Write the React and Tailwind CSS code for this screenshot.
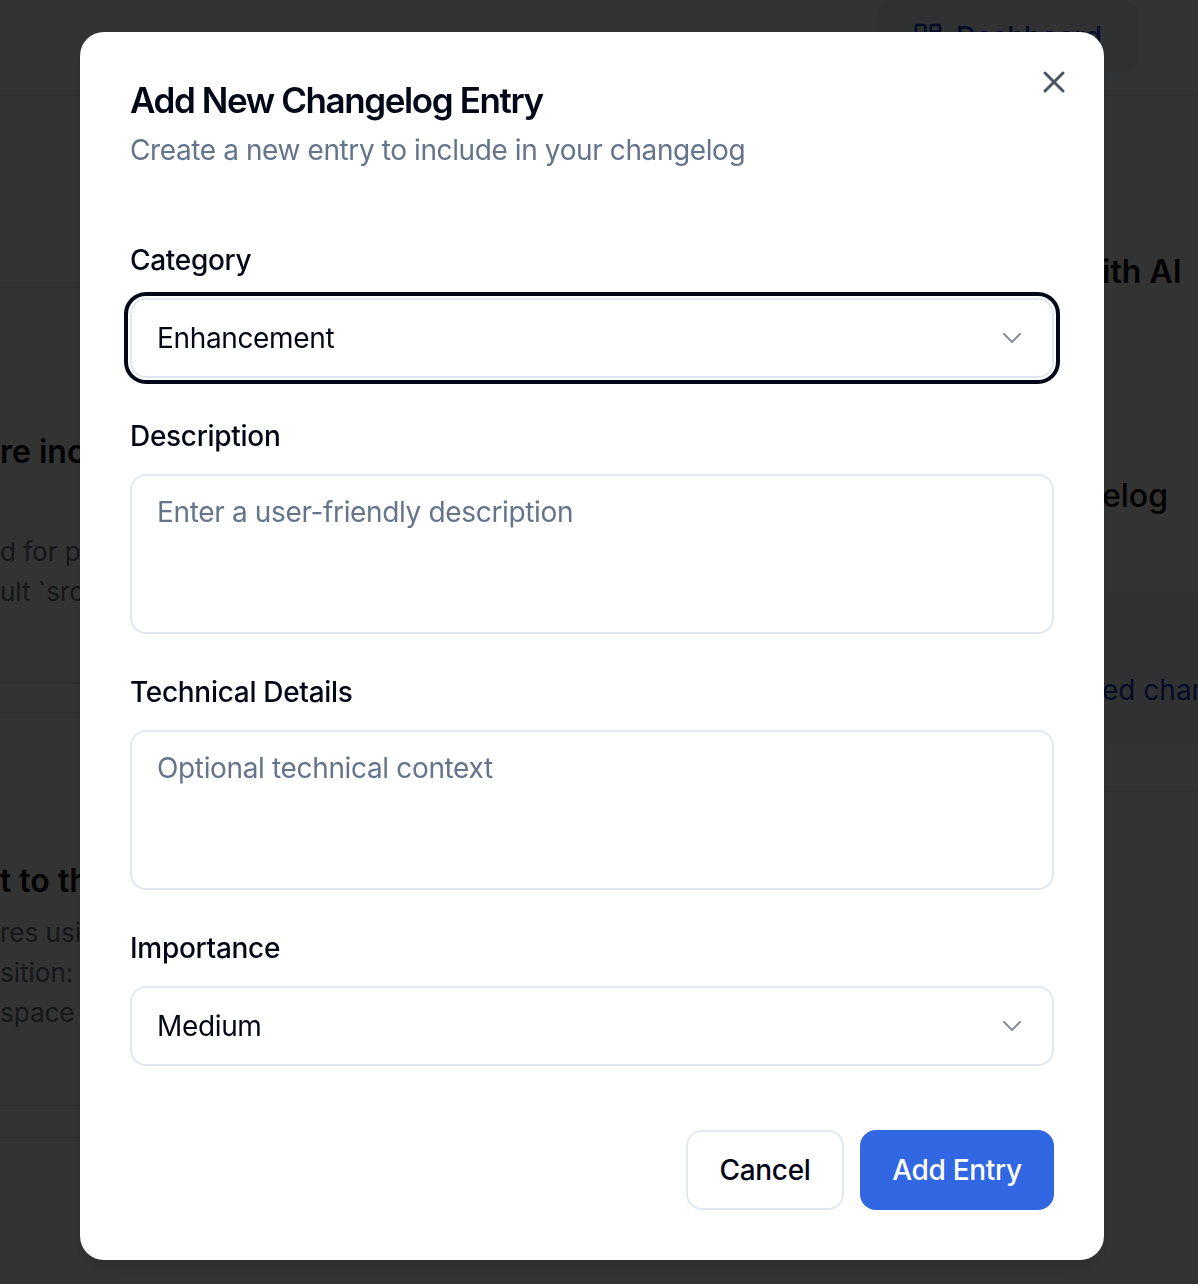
import { ChevronDown, X, Home, FileText, LayoutDashboard } from "lucide-react";

const font = { fontFamily: "Inter, 'Noto Sans', sans-serif" };

// Page that sits behind the dialog; only its edges show through the overlay
function BackgroundPage() {
  return (
    <div className="min-h-[1284px] w-[1198px] overflow-hidden bg-white text-[#0a0a0a]" style={font}>
      <header className="flex h-[96px] items-center justify-end gap-[40px] border-b-2 border-gray-200 bg-white pr-[60px]">
        <div className="flex items-center gap-3 text-[28px] text-gray-600">
          <Home size={32} /> Home
        </div>
        <div className="flex items-center gap-3 text-[28px] text-gray-600">
          <FileText size={32} /> Changelog
        </div>
        <div className="flex h-[76px] -translate-y-[10px] items-center gap-3 rounded-[16px] bg-blue-50 px-[36px] text-[28px] font-medium text-blue-800">
          <LayoutDashboard size={32} /> Dashboard
        </div>
      </header>
      <div className="flex">
        <div className="w-[90px] overflow-hidden whitespace-nowrap">
          <div className="h-[96px]" />
          <div className="h-[96px] border-b-2 border-gray-200" />
          <div className="pt-[140px] text-[32px] font-semibold">re included</div>
          <div className="pt-[56px] text-[26px] leading-[40px] text-gray-500">
            <div>d for performance</div>
            <div>ult `src` paths</div>
          </div>
          <div className="mt-[70px] h-[32px] border-y-2 border-gray-200" />
          <div className="pt-[143px] text-[32px] font-semibold">t to the</div>
          <div className="pt-[8px] text-[26px] leading-[40px] text-gray-500">
            <div>res using</div>
            <div>sition: sticky</div>
            <div>space on</div>
          </div>
          <div className="mt-[72px] h-[34px] border-y-2 border-gray-200" />
        </div>
        <div className="flex-1" />
        <div className="w-[96px] overflow-hidden whitespace-nowrap">
          <div className="pt-[152px] text-[32px] font-semibold">ith AI</div>
          <div className="pt-[176px] text-[32px] font-medium">elog</div>
          <div className="mt-[72px] h-[150px] bg-blue-50 pt-[80px] text-[28px] leading-[36px] text-blue-800">ed changes</div>
          <div className="h-[50px] border-b-2 border-gray-200" />
        </div>
      </div>
    </div>
  );
}

function Field({ label, children }) {
  return (
    <div>
      <label className="block text-[28px] font-medium leading-[40px] tracking-[-0.3px] text-[#020817]">{label}</label>
      <div className="mt-[18px]">{children}</div>
    </div>
  );
}

function SelectBox({ value, focused }) {
  return (
    <div
      className={
        "flex h-[80px] items-center justify-between rounded-[16px] border-2 border-[#e2e8f0] bg-white pl-[25px] pr-[24px] text-[28px] tracking-[-0.35px] text-[#020817] " +
        (focused ? "shadow-[0_0_0_2px_#ffffff,0_0_0_6px_#020817]" : "")
      }
    >
      <span>{value}</span>
      <ChevronDown size={32} strokeWidth={1.5} className="text-[#8a8f98]" />
    </div>
  );
}

function TextBox({ placeholder }) {
  return (
    <textarea
      placeholder={placeholder}
      className="block h-[160px] w-full resize-none rounded-[16px] border-2 border-[#e2e8f0] bg-white px-[25px] py-[16px] text-[28px] leading-[40px] tracking-[-0.35px] text-[#020817] outline-none placeholder:text-[#64748b]"
      style={font}
    />
  );
}

export default function App() {
  return (
    <div className="relative h-[1284px] w-[1198px] overflow-hidden">
      <BackgroundPage />

      {/* Dialog overlay */}
      <div className="fixed inset-0 bg-black/80" />
      <div className="fixed inset-0 flex items-start pl-[80px] pt-[32px]" style={font}>
        <div className="relative h-[1228px] w-[1024px] rounded-[24px] bg-white p-[50px] shadow-lg">
          <button className="absolute right-[32px] top-[32px] text-[#4b5563]">
            <X size={36} strokeWidth={2} />
          </button>

          <h2 className="text-[35px] font-semibold leading-[36px] tracking-[-0.04em] text-[#020817]">
            Add New Changelog Entry
          </h2>
          <p className="mt-[14px] text-[28px] leading-[36px] tracking-[-0.4px] text-[#64748b]">
            Create a new entry to include in your changelog
          </p>

          <div className="mt-[72px] flex flex-col gap-[38px]">
            <Field label="Category">
              <SelectBox value="Enhancement" focused />
            </Field>
            <Field label="Description">
              <TextBox placeholder="Enter a user-friendly description" />
            </Field>
            <Field label="Technical Details">
              <TextBox placeholder="Optional technical context" />
            </Field>
            <Field label="Importance">
              <SelectBox value="Medium" />
            </Field>
          </div>

          <div className="mt-[64px] flex justify-end gap-[16px]">
            <button className="h-[80px] w-[158px] rounded-[16px] border-2 border-[#e2e8f0] bg-white text-[28px] font-medium tracking-[-0.3px] text-[#020817]">
              Cancel
            </button>
            <button className="h-[80px] w-[194px] rounded-[16px] bg-[#3167e3] text-[28px] font-medium tracking-[-0.3px] text-white">
              Add Entry
            </button>
          </div>
        </div>
      </div>
    </div>
  );
}
